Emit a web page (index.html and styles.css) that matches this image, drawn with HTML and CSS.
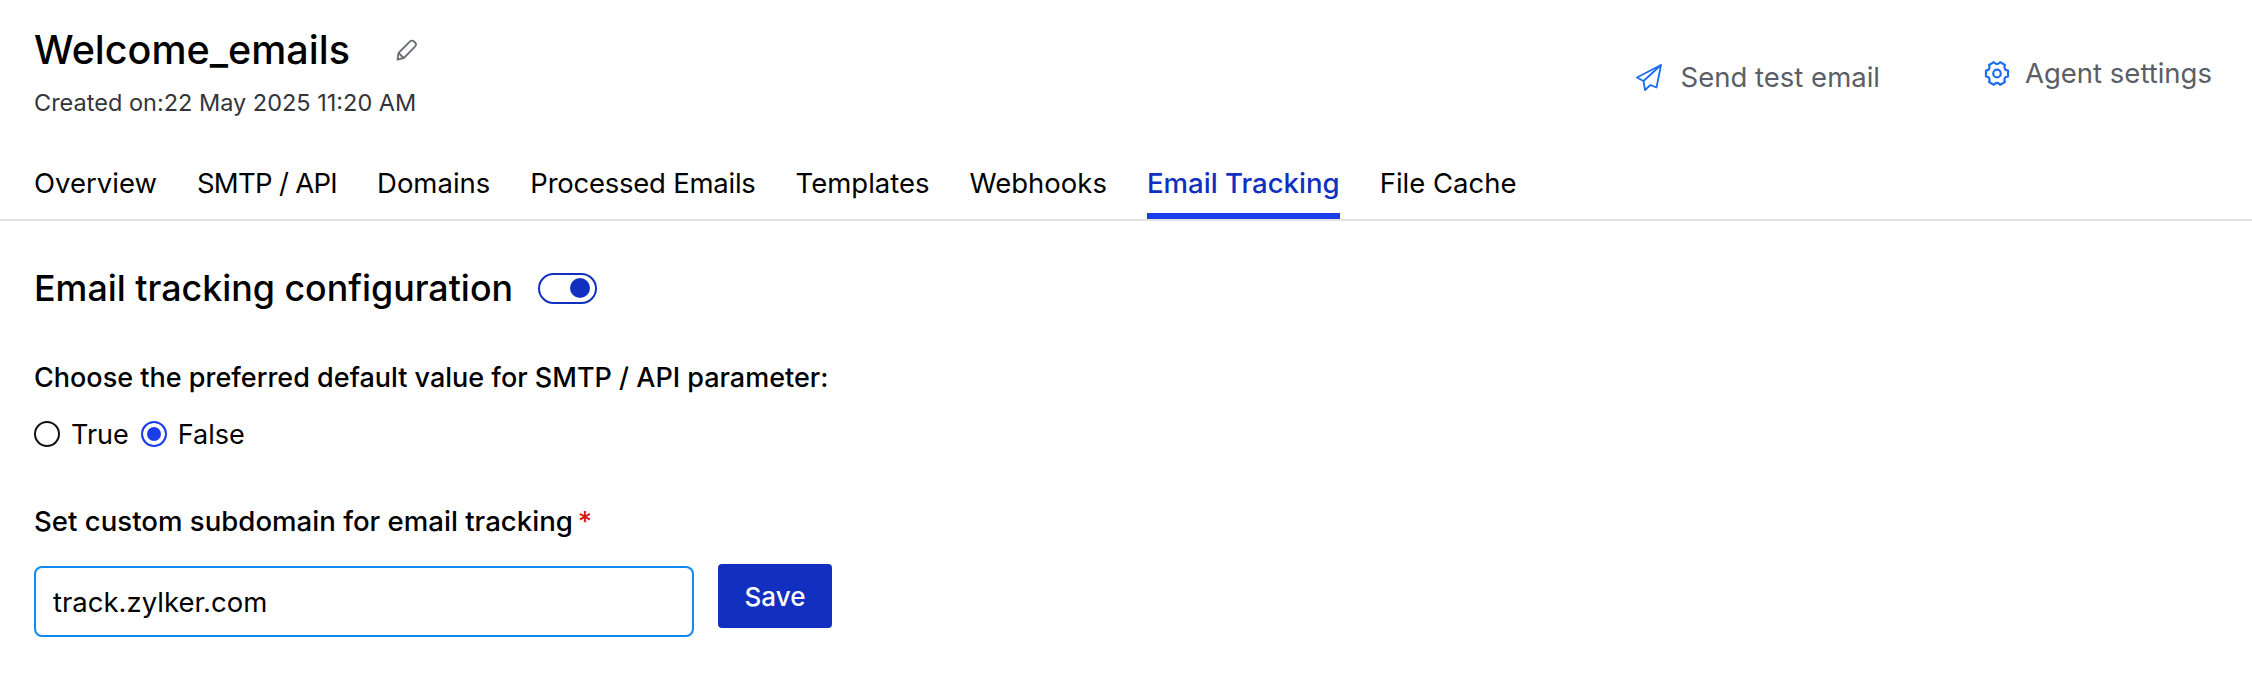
FILE: index.html
```html
<!DOCTYPE html>
<html lang="en">
<head>
    <meta charset="UTF-8">
    <title>Welcome_emails</title>
    <link rel="stylesheet" href="styles.css">
</head>
<body>
    <header class="top">
        <div class="agent-info">
            <div class="title-row">
                <h1>Welcome_emails</h1>
                <svg class="edit-icon" viewBox="0 0 22 22" fill="none" stroke="#6b6e76" stroke-width="1.8" stroke-linejoin="round">
                    <path d="M1.500 20.500l1-6.500L13.800 2.600a3 3 0 0 1 4.300 0l.9.9a3 3 0 0 1 0 4.200L7.800 19z"/>
                    <path d="M2.500 14l5.300 5"/>
                </svg>
            </div>
            <p class="created">Created on:22 May 2025 11:20 AM</p>
        </div>
        <div class="actions">
            <a class="action action-send">
                <svg class="send-icon" viewBox="0 0 26 27" fill="none" stroke="#1a6cf0" stroke-width="1.8" stroke-linejoin="round">
                    <path d="M25 1L1 13.500l6.500 3.500L9 26l5.500-5 6 2.500z"/>
                    <path d="M25 1L7.500 17"/>
                </svg>
                Send test email
            </a>
            <a class="action action-agent">
                <svg class="gear-icon" viewBox="0 0 24 24" preserveAspectRatio="none" fill="none" stroke="#1a6cf0" stroke-width="2" stroke-linejoin="round">
                    <path d="M22.190 9.460V14.540Q17.630 15.250 19.290 19.550L14.890 22.090Q12 18.500 9.110 22.090L4.710 19.550Q6.370 15.250 1.810 14.540V9.460Q6.370 8.750 4.710 4.450L9.110 1.910Q12 5.500 14.890 1.910L19.290 4.450Q17.630 8.750 22.190 9.460z"/>
                    <circle cx="12" cy="12" r="3.500"/>
                </svg>
                Agent settings
            </a>
        </div>
    </header>

    <nav class="tabs">
        <a>Overview</a>
        <a class="tab-tight">SMTP / API</a>
        <a>Domains</a>
        <a class="tab-snug">Processed Emails</a>
        <a>Templates</a>
        <a>Webhooks</a>
        <a class="active">Email Tracking</a>
        <a>File Cache</a>
    </nav>

    <main class="content">
        <div class="section-head">
            <h2>Email tracking configuration</h2>
            <span class="toggle"><span class="knob"></span></span>
        </div>

        <p class="label">Choose the preferred default value for SMTP / API parameter:</p>
        <div class="radios">
            <span class="radio"></span>
            <span class="radio-text">True</span>
            <span class="radio checked"></span>
            <span class="radio-text">False</span>
        </div>

        <p class="label label-sub">Set custom subdomain for email tracking<span class="req">*</span></p>
        <div class="form-row">
            <input class="subdomain" type="text" value="track.zylker.com">
            <button class="save">Save</button>
        </div>
    </main>
</body>
</html>
```

FILE: styles.css
```css
body {
    font-family: Inter, "Noto Sans", sans-serif;
    background: #fff;
    color: #000;
    margin: 0;
    padding: 0;
}
.top {
    display: flex;
    justify-content: space-between;
    padding: 28px 40px 0 34px;
    height: 134px;
    box-sizing: border-box;
}
.title-row {
    display: flex;
    align-items: center;
    height: 44px;
}
h1 {
    font-size: 39.5px;
    font-weight: 500;
    margin: 0;
    line-height: 44px;
}
.edit-icon {
    width: 22px;
    height: 22px;
    margin-left: 46px;
}
.created {
    font-size: 23.5px;
    color: #33353a;
    margin: 17px 0 0;
    line-height: 28px;
}
.actions {
    display: flex;
    align-items: flex-start;
    gap: 104px;
    color: #5b5e66;
    font-size: 27.5px;
}
.action {
    display: flex;
    align-items: center;
    line-height: 34px;
}
.action-send {
    margin-top: 32px;
}
.action-agent {
    margin-top: 28px;
}
.send-icon {
    width: 26px;
    height: 27px;
    margin-right: 19px;
}
.gear-icon {
    width: 26px;
    height: 27px;
    margin-right: 15px;
}
.tabs {
    display: flex;
    gap: 40px;
    padding-left: 34px;
    border-bottom: 2px solid #e2e2e2;
    height: 85px;
    box-sizing: content-box;
    font-size: 27.5px;
}
.tabs a {
    line-height: 34px;
    padding-top: 32px;
    height: 47px;
    margin-bottom: -2px;
    border-bottom: 6px solid transparent;
}
.tabs a.tab-tight {
    letter-spacing: -0.7px;
}
.tabs a.tab-snug {
    letter-spacing: -0.25px;
}
.tabs a.active {
    color: #1130c0;
    font-weight: 500;
    font-size: 27.6px;
    border-bottom-color: #1a3fe8;
}
.content {
    padding: 0 34px;
}
.section-head {
    display: flex;
    align-items: center;
    margin-top: 47px;
    height: 40px;
}
h2 {
    font-size: 35.8px;
    font-weight: 500;
    margin: 0;
    line-height: 40px;
}
.toggle {
    display: flex;
    align-items: center;
    justify-content: flex-end;
    width: 59px;
    height: 31px;
    box-sizing: border-box;
    border: 2px solid #1130c0;
    border-radius: 16px;
    margin-left: 25px;
    padding-right: 5px;
}
.knob {
    width: 20px;
    height: 20px;
    border-radius: 50%;
    background: #1130c0;
}
.label {
    font-size: 27px;
    font-weight: 500;
    margin: 53px 0 0;
    line-height: 34px;
}
.label-sub {
    font-size: 27.6px;
    margin-top: 55px;
}
.req {
    color: #d81414;
    margin-left: 5px;
}
.radios {
    display: flex;
    align-items: center;
    margin-top: 24px;
    height: 30px;
    font-size: 27px;
}
.radio {
    width: 26px;
    height: 26px;
    box-sizing: border-box;
    border: 2px solid #111;
    border-radius: 50%;
}
.radio.checked {
    border-color: #1a3fe8;
    background: #1a3fe8;
    box-shadow: inset 0 0 0 4px #fff;
}
.radio-text {
    margin-left: 11px;
    margin-right: 12px;
}
.form-row {
    display: flex;
    align-items: flex-start;
    margin-top: 26px;
}
.subdomain {
    width: 660px;
    height: 71px;
    box-sizing: border-box;
    margin: 2px 0 0;
    padding: 0 17px;
    font-family: inherit;
    font-size: 27.5px;
    color: #000;
    border: 2px solid #0f8aee;
    border-radius: 8px;
    outline: none;
}
.save {
    width: 114px;
    height: 64px;
    margin-left: 24px;
    font-family: inherit;
    font-size: 26px;
    font-weight: 500;
    color: #fff;
    background: #1130c0;
    border: none;
    border-radius: 4px;
}
```
